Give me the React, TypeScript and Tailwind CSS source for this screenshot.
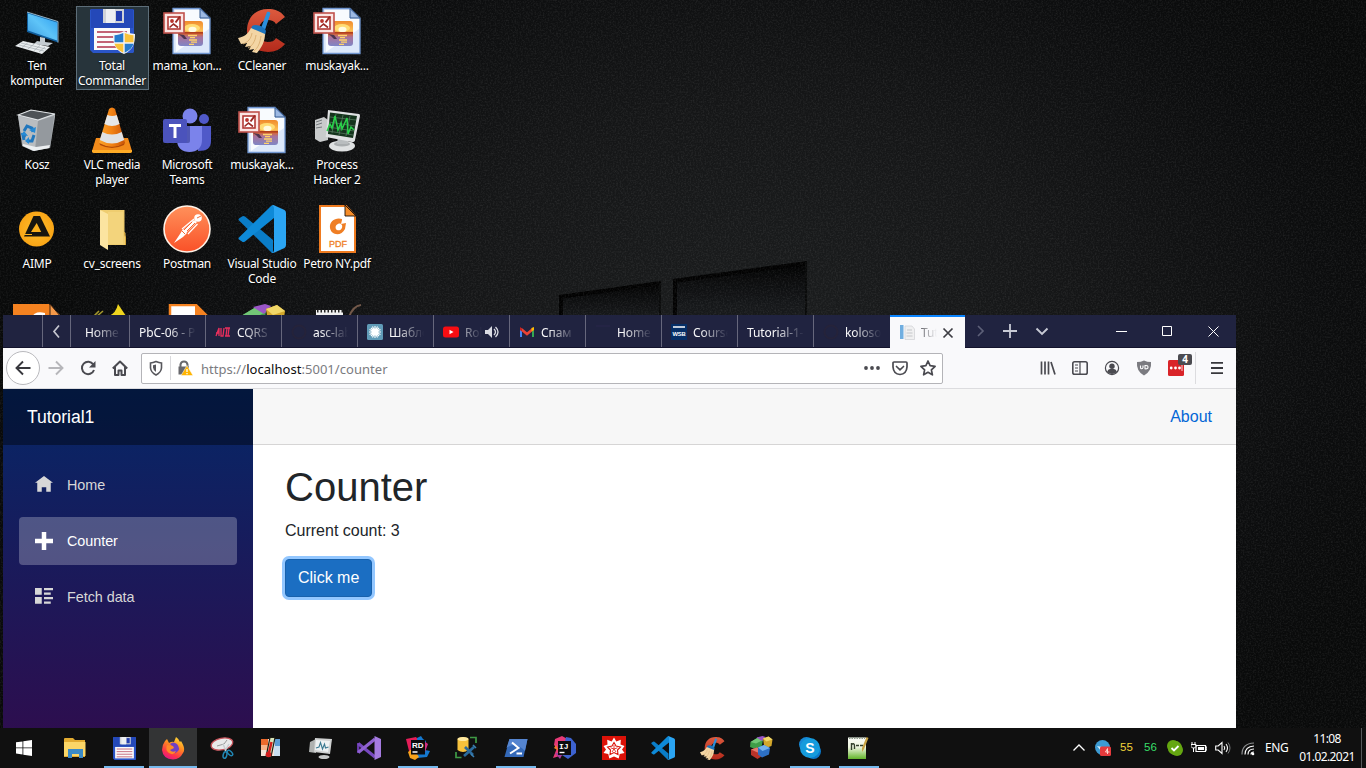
import React from "react";
import type { ReactNode } from "react";

type Box = { size?: number; box?: number; children?: ReactNode; className?: string };

function Svg({ size = 48, box = 48, children, className = "" }: Box) {
  return (
    <svg width={size} height={size} viewBox={`0 0 ${box} ${box}`} fill="none" className={`block shrink-0 ${className}`}>
      {children}
    </svg>
  );
}

/* ---------- desktop and taskbar drawings ---------- */

function ComputerIcon() {
  return (
    <Svg>
      <defs>
        <linearGradient id="pcs" x1="0" y1="1" x2="1" y2="0">
          <stop stopColor="#3a97dd" />
          <stop offset=".5" stopColor="#5ec4f8" />
          <stop offset="1" stopColor="#2a9df0" />
        </linearGradient>
      </defs>
      <path d="M14 5l31 9.500v21L14 25z" fill="#0f5c9b" />
      <path d="M15 6.500l29 9v18L15 23.500z" fill="url(#pcs)" />
      <path d="M14 5l31 9.500v21" stroke="#b5cfdd" strokeWidth=".8" />
      <path d="M27 30l5 1v4l8 1-5 3-14-2 3-3 3 .5z" fill="#c4cbd0" />
      <path d="M10 34l27 6-8 7L2 39z" fill="#e9edef" />
      <path d="M8 36l25 6M6 38l25 6M15 35.500l-6 5M21 37l-6 5M27 38.500l-6 5M32 40l-6 5" stroke="#9aa2a7" strokeWidth=".6" />
    </Svg>
  );
}

function FloppyIcon({ size = 48, shield = true }: { size?: number; shield?: boolean }) {
  return (
    <Svg size={size}>
      <path d="M3 2h42l1 1v42l-1 1H5l-3-3V3z" fill="#2a55c8" />
      <path d="M3 2h42v19H3z" fill="#2448b8" />
      <path d="M15 2h21v14H15z" fill="#cfd2d8" />
      <path d="M18 2h9v14h-9z" fill="#edeff2" />
      <path d="M28 4h6v10h-6z" fill="#233eb0" />
      <path d="M6 21h36v22H6z" fill="#fbfbfb" />
      <path d="M9 25h30M9 30h30M9 35h30M9 40h30" stroke="#b0304a" strokeWidth="1.300" />
      {shield && (
        <>
          <path d="M36 24c3 2 6 2.500 11 3 0 10-2 16-11 20-9-4-11-10-11-20 5-.5 8-1 11-3z" fill="#f3f4f6" />
          <path d="M35.300 26v9.300H26.500v-7c3-.4 6.300-1 8.800-2.300z" fill="#247bcd" />
          <path d="M36.700 26v9.300h8.800v-7c-3-.4-6.300-1-8.800-2.300z" fill="#f9c33a" />
          <path d="M26.500 36.700h8.800v9c-5-2.500-8-5.500-8.800-9z" fill="#f9c33a" />
          <path d="M45.500 36.700h-8.800v9c5-2.500 8-5.500 8.800-9z" fill="#247bcd" />
        </>
      )}
    </Svg>
  );
}

function PictureDocIcon() {
  return (
    <Svg>
      <defs>
        <linearGradient id="sun" x1="0" y1="0" x2="0" y2="1">
          <stop stopColor="#f08a2c" />
          <stop offset=".4" stopColor="#fcc055" />
          <stop offset=".5" stopColor="#d9652d" />
          <stop offset=".65" stopColor="#a9739a" />
          <stop offset="1" stopColor="#7f86c6" />
        </linearGradient>
      </defs>
      <path d="M10 1.500h27l10 9.500v35.500H10z" fill="#dce8fa" stroke="#6f95cf" strokeWidth="1.300" />
      <path d="M12 3h25v9h9v10L13 45z" fill="#fff" opacity=".8" />
      <path d="M37 1.500V11h10z" fill="#9db9e3" stroke="#33588f" strokeWidth="1" />
      <rect x="15" y="14" width="25" height="25" rx="3" fill="url(#sun)" />
      <ellipse cx="29" cy="21" rx="8" ry="4" fill="#ffdc74" />
      <ellipse cx="29.500" cy="22.500" rx="4" ry="2.800" fill="#fffbe0" />
      <path d="M15 25h25v1.600H15z" fill="#b1401f" />
      <path d="M25 28.500h9M27 30.700h5M26 33h8M28 35.200h6M26 37.300h5" stroke="#ffd36b" strokeWidth="1.300" />
      <path d="M15 27l6 1 3 4h-3l-3-3z" fill="#4c3550" />
      <rect x="1" y="6" width="20" height="20" fill="#fbe4e2" stroke="#c0524c" strokeWidth="1.600" />
      <rect x="5" y="10" width="12" height="12" fill="#fff" stroke="#b23a35" strokeWidth="1.600" />
      <circle cx="9" cy="14" r="1.900" fill="#b9352d" />
      <path d="M17 9.500l-4.500 6" stroke="#9c2a25" strokeWidth="2" />
      <path d="M6.500 20.500l4-3.500 4.500 3.500" stroke="#9c2a25" strokeWidth="1.600" />
    </Svg>
  );
}

function CCleanerIcon({ size = 48 }: { size?: number }) {
  return (
    <Svg size={size}>
      <defs>
        <linearGradient id="ccr" x1="0" y1="0" x2="0" y2="1">
          <stop stopColor="#dd5a3e" />
          <stop offset="1" stopColor="#b32a1b" />
        </linearGradient>
      </defs>
      <path d="M47 10C42 3 36 2 30 2 17 2 9 11 9 24s8 21 21 21c7 0 13-3 17-8l-9-6c-2 3-4 4-8 4-6 0-9-4-9-11s3-11 9-11c4 0 6 1 8 4z" fill="url(#ccr)" />
      <path d="M29 5c2-1 4 0 3 3l-5 15-4-2z" fill="#2b8fdc" />
      <path d="M14 19c4-3 13 1 14 5l-1 4c-5-1-10-3-14-6z" fill="#1c74bd" />
      <path d="M13 21l14 6c0 7-3 13-8 19l-5-1 2-3-5 1 2-4-6 1 2-4-6 1-3-6c6-1 10-4 13-10z" fill="#f3d5a4" />
      <path d="M14 26c-1 6-4 9-9 11M18 28c-1 7-4 11-8 13M23 29c-1 7-3 12-7 15" stroke="#d9ae71" strokeWidth=".9" />
    </Svg>
  );
}

function BinIcon() {
  return (
    <Svg>
      <path d="M5 9l13-5 24 4v3l-5 31-17 3-11-5z" fill="#a9aeb2" />
      <path d="M5 9l13-5 24 4-17 6z" fill="#4d5256" stroke="#dfe3e5" strokeWidth="1.200" />
      <path d="M5 10l20 5-2 29-13-5z" fill="#b9bdc0" />
      <path d="M25 15l16-5-4 32-15 2z" fill="#8f9498" opacity=".8" />
      <path d="M10 38l13 3 14-2-1 3-15 3-11-5z" fill="#eceff1" />
      <path d="M11 25l3-5 5 2 1 4M21 29l-2 6h-5M11 34l-1-5 3 1" stroke="#2177bd" strokeWidth="3" />
      <path d="M16 24l6 3 1-6zM16 31l-4 4 4 3zM8 29l3-4 4 5z" fill="#258ad5" />
    </Svg>
  );
}

function VlcIcon() {
  return (
    <Svg>
      <defs>
        <linearGradient id="vlc" x1="0" y1="0" x2="1" y2="0">
          <stop stopColor="#fba52c" />
          <stop offset=".5" stopColor="#f28113" />
          <stop offset="1" stopColor="#c85408" />
        </linearGradient>
      </defs>
      <path d="M8 32h32l4 13q0 2-2 2H6q-2 0-2-2z" fill="#f28a1a" />
      <path d="M11 36q13 9 26 0l-1 3q-12 6-24 0z" fill="#b34a08" />
      <path d="M4 44h40v2l-2 1H6l-2-1z" fill="#ffac26" />
      <path d="M21 3q3-3 6 0l10 34q-13 7-26 0z" fill="url(#vlc)" />
      <path d="M19.300 9q5 2 9.400 0l2.900 9q-7.600 4-15.200 0z" fill="#e6e7e8" />
      <path d="M14.300 26q9.700 5 19.400 0l2.500 8q-12.200 7-24.400 0z" fill="#e0e1e3" />
    </Svg>
  );
}

function TeamsIcon() {
  return (
    <Svg>
      <circle cx="41" cy="13" r="5" fill="#5059c9" />
      <path d="M35 20h13v15c0 7-4 10-13 10z" fill="#5059c9" />
      <circle cx="27" cy="10" r="7.500" fill="#7b83eb" />
      <path d="M14 20h25v14c0 8-5 12-12.500 12S14 42 14 34z" fill="#7b83eb" />
      <path d="M14 20h13v15q0 2-2 2H15z" fill="#5058b5" />
      <rect y="13" width="24" height="24" rx="2" fill="#4b53bc" />
      <path d="M6 18h12v3h-4.500v11h-3V21H6z" fill="#fff" />
    </Svg>
  );
}

function ProcessHackerIcon() {
  return (
    <Svg>
      <path d="M2 14l9-3 4 3v20l-8 2-5-3z" fill="#c9cbcc" />
      <path d="M3 16l6-2M3 19l6-2M3 22l6-1" stroke="#74797c" />
      <ellipse cx="29" cy="40" rx="13" ry="5.500" fill="#dfe1e2" />
      <ellipse cx="29" cy="38" rx="8" ry="2.500" fill="#a9adaf" />
      <path d="M25 30h9l1 8H24z" fill="#b9bdbf" />
      <path d="M15 4l31 4q1 0 1 2l-5 24q0 2-3 2l-26-5q-1-1 0-2z" fill="#dfe1e2" />
      <path d="M17 6.500l27 3.500-4 22-25-4z" fill="#14331c" />
      <path d="M17 11l26 3M16 16l26 4M15 21l26 4M15 25l25 4M23 8l-4 19M30 9l-4 20M37 10l-4 20" stroke="#5c8066" strokeWidth=".7" />
      <path d="M14 25l3-7 2 4 3-12 3 14 3-7 1 6 5-11 1 16 3-7 3 3" stroke="#29d34a" strokeWidth="1.500" />
    </Svg>
  );
}

function AimpIcon() {
  return (
    <Svg>
      <defs>
        <radialGradient id="aimp">
          <stop stopColor="#ffbf2e" />
          <stop offset="1" stopColor="#f9a516" />
        </radialGradient>
      </defs>
      <circle cx="23.500" cy="24" r="17.500" fill="url(#aimp)" />
      <path d="M20.500 11h6.500L37 31.500H11z" fill="#17150f" />
      <path d="M23.700 18l4.500 9H18z" fill="#fbb01d" />
      <path d="M10 29.500h9" stroke="#fbb01d" strokeWidth="1" />
    </Svg>
  );
}

function FolderIcon() {
  return (
    <Svg>
      <path d="M12 5h24.500v22l1 1v12H16z" fill="#efcd70" />
      <path d="M12 5l8 4v36l-8-5z" fill="#fbe4a0" />
      <path d="M20 7h15v32H20z" fill="#f4d680" opacity=".8" />
      <path d="M36.500 27v3l1 2v8" stroke="#d6a83e" />
    </Svg>
  );
}

function PostmanIcon() {
  return (
    <Svg>
      <defs>
        <linearGradient id="pm" x1="0" y1="0" x2="0" y2="1">
          <stop stopColor="#ff915b" />
          <stop offset="1" stopColor="#fa5128" />
        </linearGradient>
      </defs>
      <circle cx="24" cy="24" r="23" fill="url(#pm)" stroke="#fff3e8" strokeWidth="1.600" />
      <circle cx="35" cy="13" r="3.800" fill="#fff" />
      <path d="M31 15l3 2-11 11-3-3z" fill="#fff" />
      <path d="M20 24l4 4-4 4-9 6 6-9z" fill="#fff" />
      <path d="M31 14L19 24M34.500 19L25 29" stroke="#fff" strokeWidth="1.200" />
      <path d="M34 13l4-2M19 26l3 3M29 17L21 25M32 18l-8 8" stroke="#f46a38" strokeWidth="1" />
    </Svg>
  );
}

function CodeIcon({ size = 48 }: { size?: number }) {
  return (
    <Svg size={size}>
      <path d="M1 15.500q-1-1 0-2l3-2q1-1 3 0L35 35v13q-1 0-2-1z" fill="#0a7dc8" />
      <path d="M1 32.500q-1 1 0 2l3 2q1 1 3 0L36 13V0l-3 1z" fill="#0e8ad8" />
      <path d="M33 .8Q34 0 36 .3L46.500 5Q48 6 48 8v32q0 2-1.500 3L36 47.700q-2 .3-3-.8 3 1 3-2V3q0-3-3-2.200z" fill="#2ba5f3" />
    </Svg>
  );
}

function PdfIcon() {
  return (
    <Svg>
      <path d="M7 1h26l9 10v36H7z" fill="#fff" stroke="#ef7b20" strokeWidth="2" />
      <path d="M32 0v11h11z" fill="#f58c28" stroke="#18110c" strokeWidth=".9" />
      <path d="M29 14c-6-2-13 2-12 9 1 7 11 9 15 1l1-6-5 1 1-4zM29 20c1 4-2 6-5 5-2-1-2-5 1-6 2-1 3 0 4 1z" fill="#ef7e24" fillRule="evenodd" />
      <text x="25" y="41.500" textAnchor="middle" fontFamily="Liberation Sans, sans-serif" fontSize="9" fill="#ef7e24" stroke="#ef7e24" strokeWidth=".3">PDF</text>
    </Svg>
  );
}

function OrangeDoc() {
  return (
    <Svg>
      <path d="M0 0h36l12 12v36H0z" fill="#f58220" />
      <path d="M37 0v13h11z" fill="#f79a4a" stroke="#382010" />
      <path d="M18 14q4-8 14-5v5z" fill="#fff" />
    </Svg>
  );
}
function YellowThing() {
  return (
    <Svg>
      <path d="M30 0l8 12H21q7-3 9-12z" fill="#efd51e" />
      <path d="M15 7l-7 6M11 7l-6 6" stroke="#a5992d" strokeWidth="1.600" />
    </Svg>
  );
}
function WhiteDoc() {
  return (
    <Svg>
      <path d="M7 1h26l11 11v36H7z" fill="#fff" stroke="#f58220" strokeWidth="2.500" />
      <path d="M32 0v12h12z" fill="#f58220" />
    </Svg>
  );
}
function CubeStack({ size = 48 }: { size?: number }) {
  return (
    <Svg size={size}>
      <path d="M3 12L18 3l10 5-3 14-13 4L2 22z" fill="#3f9d48" />
      <path d="M3 12L18 3l10 5-14 7z" fill="#72c777" />
      <path d="M15 3l12-3 6 2-7 8z" fill="#9a56c6" />
      <path d="M28 5L39 1l8 6-2 13-14 5z" fill="#d3a72b" />
      <path d="M28 5L39 1l8 6-12 4z" fill="#f1d768" />
      <path d="M4 27l12-4 10 6v11l-9 6-13-8z" fill="#b93329" />
      <path d="M4 27l12-4 10 6-9 4z" fill="#e6796e" />
      <path d="M18 23l12-5 12 6-2 13-14 6-8-6z" fill="#2d70c5" />
      <path d="M18 23l12-5 12 6-15 6z" fill="#75b2ee" />
    </Svg>
  );
}
function NotepadIcon() {
  return (
    <Svg>
      <path d="M3 6h27v40H3z" fill="#f0f0f0" />
      <path d="M4 7h26" stroke="#222" strokeWidth="3" strokeDasharray="1.500 2" />
      <path d="M48 1q-8 1-12 12" stroke="#73594a" strokeWidth="2" />
    </Svg>
  );
}

function T({ children }: { children: ReactNode }) {
  return <Svg size={24} box={24}>{children}</Svg>;
}

const explorer = (
  <T>
    <path d="M1 4V3q0-1 1-1h8l2 2h10v17H1z" fill="#e2ab31" />
    <path d="M1 6h21.500v14H1z" fill="#fbd667" />
    <path d="M5 13h15v9h-4v-4H9v4H5z" fill="#3b8ac6" />
    <path d="M9 18h7v2H9z" fill="#fbd667" />
  </T>
);
const firefox = (
  <T>
    <defs>
      <linearGradient id="ff" x1=".8" y1="0" x2=".3" y2="1">
        <stop stopColor="#ffdf38" />
        <stop offset=".4" stopColor="#ff8b21" />
        <stop offset=".75" stopColor="#ff3647" />
        <stop offset="1" stopColor="#e51587" />
      </linearGradient>
    </defs>
    <path d="M4 5l2-2 2 4q3-2 5-1l2-5q3 2 4 5l1-1q5 8 2 12-3 6-10 6.500Q2 23 1 14q0-5 3-9z" fill="url(#ff)" />
    <path d="M9 8q3-3 7 0 4 5 0 8-4 3-8-1-2-3 1-3l3-1z" fill="#7140c5" />
    <path d="M6 9l6 1 1 2-4 2q2 3 6 1-2 5-7 2-4-3-2-8z" fill="#ff8a28" />
  </T>
);
const snip = (
  <T>
    <ellipse cx="12" cy="8" rx="11" ry="5.800" transform="rotate(-12 12 8)" fill="#e9e9ea" stroke="#c5525a" strokeWidth="1.300" />
    <path d="M7 10l7-2 3-4" stroke="#999" />
    <path d="M13 8l3 7M19 8l-4 7" stroke="#c7cdd0" strokeWidth="1.500" />
    <ellipse cx="15" cy="19" rx="1.800" ry="3.300" stroke="#2187b4" strokeWidth="1.500" transform="rotate(15 15 19)" />
    <ellipse cx="20" cy="17" rx="1.800" ry="3.300" stroke="#2187b4" strokeWidth="1.500" transform="rotate(-45 20 17)" />
  </T>
);
const thermo = (
  <T>
    <path d="M2 3h19v17H2z" fill="#f4e6da" />
    <path d="M2 3h7v6H2z" fill="#ec6a2c" />
    <path d="M2 9h7v5H2z" fill="#f7b48a" />
    <path d="M15 3h6v17h-6z" fill="#c9def0" />
    <path d="M16 3h5v7h-5z" fill="#5b9cd6" />
    <path d="M11 1.500h5L12 21H7z" fill="#d8e3b9" stroke="#1a1a12" strokeWidth="1.200" />
    <path d="M12.500 6l-3 13" stroke="#d31e1e" strokeWidth="2.500" />
    <circle cx="9.500" cy="18.500" r="2.800" fill="#d31e1e" />
  </T>
);
const perf = (
  <T>
    <path d="M2 6l6-3v14l-7-1z" fill="#aeb1b0" />
    <ellipse cx="16" cy="21" rx="5.500" ry="2" fill="#c6c8c8" />
    <path d="M7 2l17 1-2 15-16-2z" fill="#cfd1d1" />
    <path d="M8 4l14 1-2 11-13-2z" fill="#edf1f2" />
    <path d="M8 12l3-1 1.500-4.500 2 6.500 2-5 1 4 3-1" stroke="#3a7991" strokeWidth="1.100" />
  </T>
);
const vs = (
  <T>
    <path d="M1.200 7v10" stroke="#6b3bb0" strokeWidth="2.300" />
    <path d="M1.200 7.500L18 21" stroke="#7748bf" strokeWidth="3.300" />
    <path d="M1.200 16.500L18 3" stroke="#8f62d0" strokeWidth="3.300" />
    <path d="M17.500 0L24 3v18l-6.500 3z" fill="#a57be0" />
  </T>
);
const rider = (
  <T>
    <path d="M0 3l10-2 4 5-6 16-4-3z" fill="#e51d58" />
    <path d="M11 2l4-2 2 3 3 2-1 9 5 1-3 6-10 1z" fill="#1478cf" />
    <path d="M18 5l4 3-3 8z" fill="#d22d83" />
    <path d="M2 16l5-4 6 9-4 3-5-2z" fill="#f6a21a" />
    <rect x="5" y="4" width="14" height="14.500" fill="#0b0b0d" />
    <text x="6" y="11.500" fontFamily="Liberation Sans, sans-serif" fontWeight="700" fontSize="8" fill="#fff">RD</text>
    <path d="M6.500 16h5" stroke="#fff" strokeWidth="1.500" />
  </T>
);
const sql = (
  <T>
    <path d="M15 1.500h6V7M1 16v5.500h5.500" stroke="#3f9a45" strokeWidth="1.700" />
    <path d="M2.500 3q5.500-4 11 0v11q-5.500 4-11 0z" fill="#f6c13c" />
    <ellipse cx="8" cy="3" rx="5.500" ry="2" fill="#ffe9a0" />
    <path d="M9 20L19 11M10 11l8 8" stroke="#2b6a9c" strokeWidth="2.700" />
    <path d="M18 9l3 3M16 18l3 3" stroke="#3b80b3" strokeWidth="1.600" />
  </T>
);
const power = (
  <T>
    <path d="M5.500 3H23.500l-4 18H.5z" fill="#3469b8" />
    <path d="M5.500 3H23.500l-2.500 12Q11 5 2.500 12z" fill="#5585d0" />
    <path d="M8 6.500l6.500 5.500L6 17.500M12.500 17.500h5.500" stroke="#fff" strokeWidth="2" />
  </T>
);
const idea = (
  <T>
    <path d="M2 3l7-3 9 5-8 14-10 3 4-10-3-3z" fill="#e73a78" />
    <path d="M13 1l5 1 5 6v9l-8 6-6-4z" fill="#3d62cf" />
    <path d="M3 9l-2 3 5 3z" fill="#f47c2c" />
    <path d="M2 17l5 6 3-6z" fill="#a33c9c" />
    <rect x="5" y="5" width="13" height="14" fill="#0c0c0e" />
    <text x="6" y="12.500" fontFamily="Liberation Mono, monospace" fontWeight="700" fontSize="8" fill="#fff">IJ</text>
    <path d="M6.500 16.500h5" stroke="#fff" strokeWidth="1.400" />
  </T>
);
const wolfram = (
  <T>
    <path d="M0 0h24v24H0z" fill="#dc1208" />
    <path d="M12 1.500l2.300 4 4.500-1.800-.3 4.800 4 1.500-2.500 3.500 2.500 3.500-4.800 1-1 4.500-4.700-2-4.700 2-1-4.500-4.800-1L4 13.500 1.500 10l4-1.500-.3-4.800 4.500 1.800z" fill="#fff" />
    <path d="M12 6.500l2 3.500 4.500 1-3 3 .5 4.500-4-2-4 2 .5-4.500-3-3 4.500-1z" stroke="#dc1208" strokeWidth="1.100" />
    <path d="M12 13V9M12 13l3.500-1.200M12 13l2 3M12 13l-2 3M12 13l-3.500-1.200" stroke="#dc1208" strokeWidth=".8" />
  </T>
);
const skype = (
  <T>
    <circle cx="8.500" cy="8.500" r="7.500" fill="#1688d5" />
    <circle cx="15.500" cy="15.500" r="7.500" fill="#0b78c9" />
    <circle cx="12" cy="12" r="10" fill="#159bdc" />
    <text x="12" y="17" textAnchor="middle" fontFamily="Liberation Sans, sans-serif" fontWeight="700" fontSize="14" fill="#fff">S</text>
  </T>
);
const notepadPlus = (
  <T>
    <defs>
      <linearGradient id="npp" x1="0" y1="0" x2="0" y2="1">
        <stop stopColor="#fbfcf8" />
        <stop offset=".45" stopColor="#eef5df" />
        <stop offset="1" stopColor="#62b52a" />
      </linearGradient>
    </defs>
    <path d="M1 1.500h18V23H1z" fill="url(#npp)" />
    <path d="M2 2h16" stroke="#8f9a8c" strokeWidth="2" strokeDasharray="1.500 1" />
    <path d="M4.500 14V7M4.500 8.500q3-2 3 1.500v3M9 9.500h3M13 9.500h3" stroke="#33402d" strokeWidth="1.400" />
    <path d="M21.500 2L17 13l-2 3v-4l4.500-11z" fill="#c7a243" />
  </T>
);

/* ---------- data ---------- */

const desktop: { label: string; icon: ReactNode; selected?: boolean }[] = [
  { label: "Ten\nkomputer", icon: <ComputerIcon /> },
  { label: "Total\nCommander", icon: <FloppyIcon />, selected: true },
  { label: "mama_kon...", icon: <PictureDocIcon /> },
  { label: "CCleaner", icon: <CCleanerIcon /> },
  { label: "muskayak...", icon: <PictureDocIcon /> },
  { label: "Kosz", icon: <BinIcon /> },
  { label: "VLC media\nplayer", icon: <VlcIcon /> },
  { label: "Microsoft\nTeams", icon: <TeamsIcon /> },
  { label: "muskayak...", icon: <PictureDocIcon /> },
  { label: "Process\nHacker 2", icon: <ProcessHackerIcon /> },
  { label: "AIMP", icon: <AimpIcon /> },
  { label: "cv_screens", icon: <FolderIcon /> },
  { label: "Postman", icon: <PostmanIcon /> },
  { label: "Visual Studio\nCode", icon: <CodeIcon /> },
  { label: "Petro NY.pdf", icon: <PdfIcon /> },
  { label: "", icon: <OrangeDoc /> },
  { label: "", icon: <YellowThing /> },
  { label: "", icon: <WhiteDoc /> },
  { label: "", icon: <CubeStack /> },
  { label: "", icon: <NotepadIcon /> },
];

const tasks: { icon: ReactNode; state?: "open" | "active" }[] = [
  { icon: explorer },
  { icon: <FloppyIcon size={25} shield={false} />, state: "open" },
  { icon: firefox, state: "active" },
  { icon: snip },
  { icon: thermo },
  { icon: perf },
  { icon: vs },
  { icon: rider, state: "open" },
  { icon: sql },
  { icon: power, state: "open" },
  { icon: idea },
  { icon: wolfram },
  { icon: <CodeIcon size={24} /> },
  { icon: <CCleanerIcon size={25} /> },
  { icon: <CubeStack size={24} /> },
  { icon: skype, state: "open" },
  { icon: notepadPlus, state: "open" },
];

function F({ children }: { children?: ReactNode }) {
  return <Svg size={16} box={16}>{children}</Svg>;
}

const tabs: { label: string; icon?: ReactNode; sound?: boolean }[] = [
  { label: "PbC-06 - P" },
  { label: "CQRS", icon: <F><path d="M1 12l3-8v8M1 9h3M6 4v8h2l1-8M10 4h5M11 12l1-8M14 4l-1 8M10 12h5" stroke="#e92f5c" strokeWidth="1.300" /></F> },
  { label: "asc-lab", icon: <F><circle cx="8" cy="8" r="6.500" stroke="#25233a" strokeWidth="2" /></F> },
  { label: "Шабло", icon: <F><rect width="16" height="16" rx="1.500" fill="#609bb7" /><circle cx="8" cy="8" r="3.500" fill="#fff" /><path d="M8 2v12M2 8h12M4 4l8 8M12 4l-8 8M5.500 2.500l5 11M10.500 2.500l-5 11M2.500 5.500l11 5M13.500 5.500l-11 5" stroke="#fff" strokeWidth="1.100" /></F> },
  { label: "Rob", sound: true, icon: <F><rect y="2.500" width="16" height="11" rx="2.500" fill="#f80d12" /><path d="M6.500 5.700v4.600l4-2.300z" fill="#fff" /></F> },
  { label: "Спам", icon: <F><path d="M1 13V4l2 .5V13z" fill="#4285f4" /><path d="M13 5l2-1v9h-2z" fill="#34a853" /><path d="M2 5l6 5 6-5" stroke="#ea4335" strokeWidth="2.600" /><path d="M12.500 4L15 3v3l-2.500 1.500z" fill="#fbbc04" /><path d="M1 3l2 1.500v3L1 6z" fill="#c5221f" /></F> },
  { label: "Home", icon: <F><path d="M1 2h14" stroke="#29264a" /></F> },
  { label: "Course", icon: <F><path d="M0 0h16v16H0z" fill="#052f67" /><path d="M2 3h12" stroke="#fff" strokeWidth="1.500" /><text x="8" y="11.500" textAnchor="middle" fontFamily="Liberation Sans, sans-serif" fontWeight="700" fontSize="5.800" fill="#fff">WSB</text></F> },
  { label: "Tutorial-1-" },
  { label: "kolosov", icon: <F><circle cx="8" cy="8" r="6.500" stroke="#25233a" strokeWidth="2" /></F> },
];

function Fade({ children }: { children: ReactNode }) {
  return (
    <span className="mt-[3px] min-w-0 grow overflow-hidden whitespace-nowrap [mask-image:linear-gradient(to_right,#000_calc(100%-28px),transparent)]">
      {children}
    </span>
  );
}

function TabStrip() {
  return (
    <div className="flex h-[33px] items-stretch border-b border-[#13132c] bg-[#202340] text-[12px] leading-[34px] tracking-[-0.1px] text-[#f9f9fa]">
      <div className="w-10 shrink-0 border-r border-[#66677c]" />
      <div className="flex w-7 shrink-0 items-center justify-center border-r border-[#66677c]">
        <F><path d="M10 2.500l-5 6 5 6" stroke="#c6c7d0" strokeWidth="1.700" /></F>
      </div>
      <div className="flex w-[59px] shrink-0 items-center border-r border-[#66677c] pl-[14px] pr-2"><Fade>Home</Fade></div>
      {tabs.map((t, i) => (
        <div key={i} className={`flex w-[76px] shrink-0 items-center pl-[9px] pr-[9px] ${i < 9 ? "border-r border-[#66677c]" : ""}`}>
          {t.icon && <span className="mr-1.5 pt-px">{t.icon}</span>}
          <Fade>{t.label}</Fade>
          {t.sound && (
            <span className="mr-px ml-[3px] pt-px">
              <Svg size={14} box={14}>
                <path d="M0 5h3l4-4v12L3 9H0z" fill="#dadbe3" />
                <path d="M9 4q3 3 0 6M10.500 2q5 5 0 10" stroke="#dadbe3" strokeWidth="1.300" />
              </Svg>
            </span>
          )}
        </div>
      ))}
      <div className="-mb-px flex w-[75px] shrink-0 items-center border-t-2 border-[#0a84ff] bg-[#f9f9fb] pl-[9px] text-[#6a6a70]">
        <span className="mr-1.5">
          <F>
            <path d="M1 0h3.500v14H1z" fill="#70aee0" />
            <path d="M6 1h7l2.500 3v10.500H6z" fill="#f0f0f1" stroke="#cfd0d4" strokeWidth=".7" />
            <path d="M8 5h5M7.500 8h6M7.500 11h6" stroke="#b9bbc0" strokeWidth=".8" />
          </F>
        </span>
        <span className="w-4 overflow-hidden [mask-image:linear-gradient(to_right,#000,transparent)]">Tut</span>
        <Svg size={12} box={12} className="ml-[5px]"><path d="M1.500 1.500l9 9M10.500 1.500l-9 9" stroke="#3d3d43" strokeWidth="1.700" /></Svg>
      </div>
      <div className="ml-[7px] flex items-center gap-4">
        <F><path d="M6 3l5 5-5 5" stroke="#5d6078" strokeWidth="1.700" /></F>
        <Svg size={14} box={14} className="-ml-px"><path d="M7 0v14M0 7h14" stroke="#c8cad5" strokeWidth="1.800" /></Svg>
        <Svg size={14} box={14} className="ml-0.5"><path d="M1.500 4.500L7 10l5.500-5.500" stroke="#c8cad5" strokeWidth="1.900" /></Svg>
      </div>
      <div className="ml-auto flex items-center">
        <span className="flex w-[46px] justify-center"><Svg size={11} box={11}><path d="M0 5.500h11" stroke="#fff" /></Svg></span>
        <span className="flex w-[46px] justify-center"><Svg size={10} box={10}><path d="M.5.500h9v9h-9z" stroke="#fff" /></Svg></span>
        <span className="flex w-[46px] justify-center"><Svg size={11} box={11}><path d="M.5.500l10 10M10.500.500l-10 10" stroke="#fff" /></Svg></span>
      </div>
    </div>
  );
}

function Toolbar() {
  return (
    <div className="flex h-[41px] items-center border-b border-[#dcdcdf] bg-[#f9f9fb]">
      <div className="ml-[3px] flex size-[34px] shrink-0 items-center justify-center rounded-full border border-[#b9b9bd] bg-white">
        <F><path d="M15.500 8H2M8 1.500L1.500 8 8 14.500" stroke="#38383d" strokeWidth="1.900" /></F>
      </div>
      <div className="ml-2 flex items-center gap-4">
        <F><path d="M.5 8H14M8 1.500L14.500 8 8 14.500" stroke="#b6b6ba" strokeWidth="1.900" /></F>
        <F><path d="M13.300 4.500A6.200 6.200 0 1 0 14 10" stroke="#4a4a50" strokeWidth="2" /><path d="M15.500 1v6.500H9z" fill="#4a4a50" /></F>
        <F><path d="M.8 8.500L8 1.500l7.200 7M3 7v8h3.500v-4.500h3V15H13V7" stroke="#4a4a50" strokeWidth="2" strokeLinejoin="round" /></F>
      </div>
      <div className="ml-[13px] flex h-[31px] w-[802px] shrink-0 items-center rounded-[2px] border border-[#b4b4b8] bg-white pl-[6px]">
        <F><path d="M8 1.500q3 1.300 5.500 1.500v5q-.5 4.500-5.500 7-5-2.500-5.500-7V3Q5 2.800 8 1.500z" stroke="#57575c" strokeWidth="1.600" /><path d="M8 4.500v7.500Q5 10 5 7.500V5.300z" fill="#57575c" /></F>
        <div className="mr-[6px] ml-[6px] h-6 w-px bg-[#dadadd]" />
        <F>
          <path d="M3.500 7V4.500Q4 1.500 7 1.500t3.500 3V7" stroke="#68686c" strokeWidth="2" />
          <path d="M1.500 6.500H12v8H1.500z" fill="#68686c" />
          <path d="M10 5.500l6 10H4z" fill="#ffb400" stroke="#fff" strokeWidth=".5" />
          <path d="M10 9v3M10 13v1.200" stroke="#fff" strokeWidth="1.300" />
        </F>
        <span className="ml-2 pt-[3px] text-[13px] tracking-[0.040px] text-[#7b7b80]">https://<span className="text-[#0c0c0d]">localhost</span>:5001/counter</span>
        <div className="mr-[6px] ml-auto flex items-center gap-3">
          <F><circle cx="2" cy="8" r="1.900" fill="#4a4a50" /><circle cx="8" cy="8" r="1.900" fill="#4a4a50" /><circle cx="14" cy="8" r="1.900" fill="#4a4a50" /></F>
          <F><path d="M2 2h12q1 0 1 1v4q-.5 7-7 7.500Q1.500 14 1 7V3q0-1 1-1z" stroke="#4a4a50" strokeWidth="1.700" /><path d="M4.500 6.500L8 9.800l3.500-3.300" stroke="#4a4a50" strokeWidth="1.700" strokeLinecap="round" /></F>
          <F><path d="M8 1l2.100 4.700 5 .6-3.700 3.500 1 5L8 12.300l-4.400 2.500 1-5L.9 6.300l5-.6z" stroke="#4a4a50" strokeWidth="1.700" strokeLinejoin="round" /></F>
        </div>
      </div>
      <div className="ml-auto flex items-center">
        <div className="flex items-center gap-4">
          <F><path d="M1.500 1.500v13M5 1.500v13M8.500 1.500v13M11 2l4 12.500" stroke="#4a4a50" strokeWidth="1.700" /></F>
          <F><rect x=".8" y="1.800" width="14.400" height="12.400" rx="1.800" stroke="#4a4a50" strokeWidth="1.600" /><path d="M8 2v12M3 5h3M3 8h3M3 11h3" stroke="#4a4a50" strokeWidth="1.200" /></F>
          <F><circle cx="8" cy="8" r="6.600" stroke="#4a4a50" strokeWidth="1.200" /><circle cx="8" cy="6.300" r="2.700" fill="#4a4a50" /><path d="M3 12q1-3 3-3h4q2 0 3 3-2 2-5 2t-5-2z" fill="#4a4a50" /></F>
          <F><path d="M8 .5q3 1.500 7 1.500 1 9-7 13.500Q0 11 1 2q4 0 7-1.500z" fill="#7b7b80" /><path d="M4.500 5.500v2q0 1.300 1.200 1.300T7 7.500V5.500M9 5.500q3-.3 3 1.700T9 8.800z" stroke="#fff" strokeWidth="1.100" /></F>
          <div className="relative">
            <F><rect width="16" height="16" rx="1.500" fill="#d92429" /><circle cx="3.200" cy="8" r="1.400" fill="#fff" /><circle cx="7.500" cy="8" r="1.400" fill="#fff" /><circle cx="11.500" cy="8" r="1.400" fill="#fff" /><path d="M14 5v6" stroke="#fff" strokeWidth=".8" /></F>
            <span className="absolute -top-1.5 left-2.5 h-[11px] w-[14px] rounded-[2px] bg-[#4b4b50] text-center text-[10px] leading-[11px] font-bold text-white">4</span>
          </div>
        </div>
        <div className="ml-[11px] h-8 w-px bg-[#dcdcdf]" />
        <div className="mr-[11px] ml-[13px]"><F><path d="M2 2.800h12M2 8h12M2 13.200h12" stroke="#38383d" strokeWidth="1.800" /></F></div>
      </div>
    </div>
  );
}

function NavItem({ label, active, children }: { label: string; active?: boolean; children: ReactNode }) {
  return (
    <a className={`flex h-12 items-center rounded-[4px] pl-4 text-[14.400px] ${active ? "bg-white/25 text-white" : "text-[#d7d7d7]"}`}>
      <Svg size={18} box={8} className="-mt-px mr-[14px]">{children}</Svg>
      <span className="pt-0.5 tracking-[-0.050px]">{label}</span>
    </a>
  );
}

function Page() {
  return (
    <div className="flex min-h-0 grow bg-white font-['Liberation_Sans',Arial,sans-serif]">
      <aside className="w-[250px] shrink-0 bg-[linear-gradient(180deg,rgb(5,39,103)_0px,#3a0647_453px)]">
        <div className="flex h-14 items-center bg-black/40 pl-6 text-[17.600px] text-white"><span className="tracking-[-0.060px]">Tutorial1</span></div>
        <nav className="flex flex-col gap-2 p-4">
          <NavItem label="Home"><path d="M4 0L0 3h1v4h2V5h2v2h2V3h1z" fill="currentColor" /></NavItem>
          <NavItem label="Counter" active><path d="M3 0v3H0v2h3v3h2V5h3V3H5V0z" fill="currentColor" /></NavItem>
          <NavItem label="Fetch data"><path d="M0 0v3h3V0zM4 0v1h4V0zM4 2v1h3V2zM0 4v3h3V4zM4 4v1h4V4zM4 6v1h3V6z" fill="currentColor" /></NavItem>
        </nav>
      </aside>
      <main className="grow text-base text-[#212529]">
        <div className="flex h-14 items-center justify-end border-b border-[#d6d5d5] bg-[#f7f7f7] pr-6">
          <a className="text-[#0366d6]">About</a>
        </div>
        <div className="pt-[17.600px] pl-8">
          <h1 className="mb-2 text-[40px] leading-[48px]">Counter</h1>
          <p className="mb-4">Current count: 3</p>
          <button className="block h-[38px] rounded-[4px] border border-[#1861ac] bg-[#1b6ec2] px-3 text-white shadow-[0_0_0_3px_#93c7ff]">Click me</button>
        </div>
      </main>
    </div>
  );
}

function Taskbar() {
  return (
    <footer className="absolute inset-x-0 bottom-0 flex h-10 items-center bg-[#101010] text-[12px] text-white">
      <div className="flex w-[51px] shrink-0 pl-4">
        <F><path d="M0 2.300l6.500-.9v6.100H0zM7.300 1.300L16 0v7.500H7.300zM0 8.300h6.500v6.200L0 13.600zM7.300 8.300H16V16l-8.700-1.300z" fill="#fff" /></F>
      </div>
      {tasks.map((t, i) => (
        <div key={i} className={`mr-px flex h-10 w-12 shrink-0 flex-col items-center pt-2 ${t.state === "active" ? "bg-[#333435]" : ""}`}>
          {t.icon}
          {t.state && <div className={`mt-auto h-0.5 bg-[#76b9ed] ${t.state === "active" ? "w-12" : "w-10"}`} />}
        </div>
      ))}
      <div className="ml-auto flex h-10 items-center">
        <Svg size={12} box={12}><path d="M.5 8.500L6 3l5.500 5.500" stroke="#fff" strokeWidth="1.300" /></Svg>
        <Svg size={16} box={16} className="ml-2.5">
          <circle cx="7.500" cy="7.500" r="7.500" fill="#3d9bd3" />
          <path d="M2 6l5 1 3 2-4 2z" fill="#d9eefa" />
          <rect x="5" y="6.500" width="11" height="9.500" rx="1.500" fill="#e53a3c" />
          <path d="M12.500 8.500v5.500M12.500 8.500L10.500 12h4" stroke="#ffd6cf" />
        </Svg>
        <span className="ml-[9px] w-[13px] font-['Liberation_Sans',sans-serif] text-[11.500px] text-[#f1d43b]">55</span>
        <span className="ml-[11px] w-[13px] font-['Liberation_Sans',sans-serif] text-[11.500px] text-[#38df69]">56</span>
        <Svg size={16} box={16} className="ml-2.5"><circle cx="6" cy="6" r="6" fill="#65a711" /><circle cx="10" cy="10" r="6" fill="#65a711" /><circle cx="8" cy="8" r="7.200" fill="#65a711" /><path d="M4.500 8l2.500 2.500L11.500 6" stroke="#fff" strokeWidth="1.800" /></Svg>
        <Svg size={16} box={16} className="ml-2"><path d="M5 5.500h9.500v6H5zM14.500 7H16v3h-1.500" stroke="#fff" strokeWidth="1.200" /><path d="M7 7h6v3H7z" fill="#fff" /><path d="M1 2v3M4 2v3M0 4.500h5v2L3.500 8h-2L0 6.500zM2.500 8v4" stroke="#fff" /></Svg>
        <Svg size={16} box={16} className="ml-2"><path d="M.7 6h2.500L7 2.500v11L3.200 10H.7z" stroke="#fff" strokeWidth="1.100" /><path d="M9 6q1.500 2 0 4M11 4q3 4 0 8" stroke="#fff" strokeWidth="1.100" /><path d="M13 2.500q4 5.500 0 11" stroke="#77797a" /></Svg>
        <Svg size={16} box={16} className="ml-2.5"><path d="M1 14.500Q1 3.500 13 3" stroke="#8d8f90" strokeWidth="1.200" /><path d="M4 14.500Q4 6.500 13 6M7 14.500Q7 9 13 9M10 14.500q0-2.500 3-2.500" stroke="#fff" strokeWidth="1.200" /><circle cx="12" cy="14" r="1.300" fill="#fff" /></Svg>
        <span className="ml-2 w-6 tracking-[-0.400px]">ENG</span>
        <div className="ml-[9px] w-[58px] text-center leading-[18px] tracking-[-0.600px] whitespace-nowrap"><div>11:08</div><div>01.02.2021</div></div>
        <div className="mr-1 ml-[5px] h-10 w-px bg-[#55585a]" />
      </div>
    </footer>
  );
}

function Wallpaper() {
  return (
    <svg className="absolute inset-0" width="1366" height="768" viewBox="0 0 1366 768">
      <defs>
        <radialGradient id="wall" gradientUnits="userSpaceOnUse" cx="760" cy="330" r="700" gradientTransform="translate(760 330) scale(1 .72) translate(-760 -330)">
          <stop stopColor="#1b1d1e" />
          <stop offset=".45" stopColor="#151617" />
          <stop offset=".8" stopColor="#0c0d0e" />
          <stop offset="1" stopColor="#090a0a" />
        </radialGradient>
        <linearGradient id="pane" x1="0" y1="0" x2="0" y2="1">
          <stop stopColor="#010101" />
          <stop offset=".25" stopColor="#0c0d0e" />
          <stop offset=".55" stopColor="#16181a" />
          <stop offset="1" stopColor="#1a1c1e" />
        </linearGradient>
        <filter id="weave" x="0" y="0" width="100%" height="100%">
          <feTurbulence type="fractalNoise" baseFrequency=".6" numOctaves="2" seed="4" />
          <feColorMatrix values="0 0 0 0 1  0 0 0 0 1  0 0 0 0 1  1.600 0 0 0 -.65" />
        </filter>
      </defs>
      <path d="M0 0h1366v768H0z" fill="url(#wall)" />
      <path d="M559 296l102-14v60H559z" fill="url(#pane)" />
      <path d="M673 280l134-18v80H673z" fill="url(#pane)" />
      <path d="M561 297v30M675 281v46" stroke="#020202" strokeWidth="4" />
      <path d="M559 297l102-14M673 281l134-18" stroke="#020202" strokeWidth="4" />
      <path d="M660 283v40M806 262v60" stroke="#090a0a" strokeWidth="2" />
      <path d="M0 0h1366v768H0z" filter="url(#weave)" opacity=".1" />
    </svg>
  );
}

export default function App() {
  return (
    <div className="relative h-[768px] w-[1366px] overflow-hidden bg-[#0d0d0e] font-['Noto_Sans','Open_Sans',sans-serif]">
      <Wallpaper />
      <div className="relative grid w-[375px] auto-rows-[99px] grid-cols-[repeat(5,75px)] pt-[6px]">
        {desktop.map((d, i) => (
          <div key={i} className="flex justify-center pr-px">
            <div className={`flex h-[84px] w-[73px] flex-col items-center ${d.selected ? "bg-[#27343b] outline -outline-offset-1 outline-[#5d6e79]" : ""}`}>
              <div className="mt-px">{d.icon}</div>
              <div className="mt-[3px] text-center text-[12px] leading-[15px] tracking-[-0.280px] whitespace-pre text-white [text-shadow:0_1px_2px_#000]">{d.label}</div>
            </div>
          </div>
        ))}
      </div>
      <section className="absolute top-[315px] left-[3px] flex h-[413px] w-[1233px] flex-col overflow-hidden">
        <TabStrip />
        <Toolbar />
        <Page />
      </section>
      <Taskbar />
    </div>
  );
}
